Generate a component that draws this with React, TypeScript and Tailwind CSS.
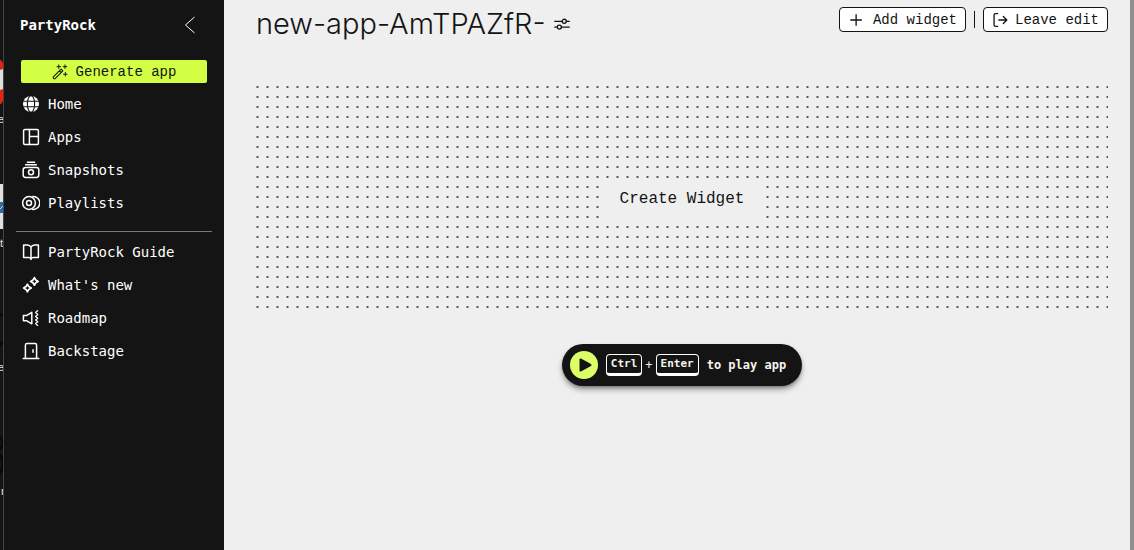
import type { ReactNode } from "react";

const mono = "font-['Liberation_Mono',monospace]";
const sturdyMono = "font-['DejaVu_Sans_Mono',monospace]";

type IconProps = { children: ReactNode; className?: string };

function Icon({ children, className = "size-[18px]" }: IconProps) {
  return (
    <svg
      viewBox="0 0 18 18"
      className={className}
      fill="none"
      stroke="currentColor"
      strokeWidth="1.5"
      strokeLinecap="round"
      strokeLinejoin="round"
      aria-hidden="true"
    >
      {children}
    </svg>
  );
}

const primaryLinks: { label: string; icon: ReactNode }[] = [
  {
    label: "Home",
    icon: (
      <Icon>
        <circle cx="9" cy="9" r="8" fill="currentColor" stroke="none" />
        <g stroke="#141414" strokeWidth="1.1">
          <ellipse cx="9" cy="9" rx="3.6" ry="8.4" />
          <path d="M.5 6.2h17M.5 11.8h17" />
        </g>
      </Icon>
    ),
  },
  {
    label: "Apps",
    icon: (
      <Icon>
        <rect x="1.6" y="1.6" width="14.8" height="14.8" rx="1.2" />
        <path d="M7.4 1.6v14.8M7.4 8.5h9" />
      </Icon>
    ),
  },
  {
    label: "Snapshots",
    icon: (
      <Icon>
        <path d="M5.4 1.3h7.2M3.6 3.8h10.8" />
        <rect x="1.2" y="6.4" width="15.6" height="10" rx="2.4" />
        <circle cx="9" cy="11.2" r="2.5" />
      </Icon>
    ),
  },
  {
    label: "Playlists",
    icon: (
      <Icon>
        <circle cx="7" cy="9" r="6.4" />
        <circle cx="7" cy="9" r="2.5" />
        <path d="M10.8 2.6h.6a6.4 6.4 0 0 1 0 12.8h-.6" />
      </Icon>
    ),
  },
];

const secondaryLinks: { label: string; icon: ReactNode }[] = [
  {
    label: "PartyRock Guide",
    icon: (
      <Icon>
        <path d="M9 4.2C8.2 2.8 7.2 2 5.6 2H1.6v12.4h5c1.4 0 2.4.8 2.4 2.2 0-1.4 1-2.2 2.4-2.2h5V2h-4C10.8 2 9.8 2.8 9 4.2zM9 4.2v12" />
      </Icon>
    ),
  },
  {
    label: "What's new",
    icon: (
      <Icon>
        <path d="M5.4 8.2 6.8 10.6 9.2 12 6.8 13.4 5.4 15.8 4 13.4 1.6 12 4 10.6z" strokeWidth="1.7" />
        <path d="M12.4 1.6 13.8 4 16.2 5.4 13.8 6.8 12.4 9.2 11 6.8 8.6 5.4 11 4z" strokeWidth="1.7" />
      </Icon>
    ),
  },
  {
    label: "Roadmap",
    icon: (
      <Icon>
        <path d="M1.4 6.4h3.4L9.8 3.4v11.4L4.8 11.8H1.4z" />
        <path d="M15.6 1.8 13.6 3.6 15.8 5.6 13.6 7.4 15.8 9.2 13.6 11 15.8 12.8 13.6 14.6 15.6 16.4" strokeWidth="1.3" />
      </Icon>
    ),
  },
  {
    label: "Backstage",
    icon: (
      <Icon>
        <path d="M1.2 16.4h15.6M3.4 16.4V3.2c0-1 .6-1.600 1.600-1.600h8c1 0 1.600.6 1.600 1.600v13.200M11 7.800v2.400" />
      </Icon>
    ),
  },
];

function NavList({ items }: { items: { label: string; icon: ReactNode }[] }) {
  return (
    <ul>
      {items.map((item) => (
        <li key={item.label}>
          <a href="#" className="flex h-[33px] items-center gap-2 pl-1.5">
            {item.icon}
            <span className={`${sturdyMono} text-sm font-medium`}>{item.label}</span>
          </a>
        </li>
      ))}
    </ul>
  );
}

function PageEdge() {
  return (
    <div className="w-1 shrink-0 overflow-hidden border-r border-[#444444] bg-[#141414]" aria-hidden="true">
      <svg width="3" height="550" className="block">
        <path d="M0 60h1l2 3v38l-2 3H0z" fill="#e3230b" />
        <path d="M0 70l3-1v20l-3 1z" fill="#dedede" />
        <rect y="184" width="3" height="45" fill="#dfe1e3" />
        <rect y="202" width="3" height="11" fill="#2e6da8" />
        <path d="M0 209l3-3" stroke="#c4d8e8" />
        <path d="M0 314l3 2M0 345l3-3M0 437c4 3 3 10 0 12M0 455c4 3 3 16 0 18" stroke="#050505" strokeWidth="2" fill="none" />
        <g fill="#e8e8e8" fontFamily="Liberation Sans" fontSize="11">
          <text x="-2" y="123">e</text>
          <text x="0" y="247">t</text>
          <text x="-2" y="371">e</text>
          <text x="1" y="495">r</text>
        </g>
      </svg>
    </div>
  );
}

function Sidebar() {
  return (
    <aside className="w-[220px] shrink-0 bg-[#141414] px-3 text-white">
      <div className="flex h-[49px] items-center justify-between pr-3 pl-1">
        <span className={`${sturdyMono} text-sm font-bold`}>PartyRock</span>
        <button type="button" aria-label="Collapse sidebar">
          <svg viewBox="0 0 20 20" className="size-5" fill="none" stroke="currentColor" aria-hidden="true">
            <path d="M14.5 2 5.5 10l9 8" />
          </svg>
        </button>
      </div>
      <div className="px-[5px] pt-[11px] pb-1">
        <button
          type="button"
          className="flex h-[23px] w-full items-center justify-center gap-2 rounded-xs bg-[#d2ff44] text-sm text-[#141414]"
        >
          <Icon className="size-4">
            <path d="M1.8 14.2 10.2 5.8 12.2 7.8 3.8 16.2a1.4 1.4 0 0 1-2-2zM8.4 7.6l2 2" strokeWidth="1.2" />
            <path d="M7.6 1v4M5.6 3h4M14.6 1v4M12.6 3h4M15 9.5v4M13 11.5h4" strokeWidth="1.1" />
          </Icon>
          Generate app
        </button>
      </div>
      <nav aria-label="Main">
        <NavList items={primaryLinks} />
        <hr className="mt-3 mb-[3px] border-[#777777]" />
        <NavList items={secondaryLinks} />
      </nav>
    </aside>
  );
}

function Header() {
  return (
    <header className="flex items-start justify-between">
      <div className="flex h-12 items-center gap-2">
        <h1 className="font-['Inter',sans-serif] text-[29px] leading-9 font-light">new-app-AmTPAZfR-</h1>
        <button type="button" aria-label="App settings">
          <Icon className="size-4">
            <path d="M.8 6h8.2M14 6h3.2M.8 12.5h2.2M8.4 12.5h8.8" />
            <circle cx="11.5" cy="6" r="2.3" />
            <circle cx="6" cy="12.5" r="2.3" />
          </Icon>
        </button>
      </div>
      <div className="flex items-center gap-2 pt-[7px]">
        <button
          type="button"
          className="flex h-[25px] items-center gap-2 rounded-sm border border-[#141414] bg-white pr-2 pl-[9px] text-sm"
        >
          <Icon className="size-4">
            <path d="M8 3v12M2 9h12" />
          </Icon>
          Add widget
        </button>
        <div className="h-[17px] w-px bg-[#141414]" />
        <button
          type="button"
          className="flex h-[25px] items-center gap-1.5 rounded-sm border border-[#141414] bg-white pr-2 pl-[9px] text-sm"
        >
          <Icon className="size-4">
            <path d="M5.2 1.8H3a1.8 1.8 0 0 0-1.8 1.8v10.8A1.8 1.8 0 0 0 3 16.2h2.2M6.6 9h9M11.6 5 15.6 9l-4 4" />
          </Icon>
          Leave edit
        </button>
      </div>
    </header>
  );
}

function PlayBar() {
  return (
    <button
      type="button"
      className={`${sturdyMono} flex h-[42px] items-center rounded-full bg-[#141414] pr-4 pl-2 text-[#f4f4ea] shadow-md shadow-black/40`}
    >
      <svg viewBox="0 0 28 28" className="size-7" aria-hidden="true">
        <circle cx="14" cy="14" r="14" fill="#dcff65" />
        <path d="M10.5 8.5v11l10-5.5z" fill="#141414" stroke="#141414" strokeWidth="2" strokeLinejoin="round" />
      </svg>
      <kbd className={`${sturdyMono} ml-2 rounded-sm border border-b-3 border-white px-1 text-[11px] leading-[18px] font-bold`}>
        Ctrl
      </kbd>
      <span className="px-[3px] text-xs">+</span>
      <kbd className={`${sturdyMono} rounded-sm border border-b-3 border-white px-1 text-[11px] leading-[18px] font-bold`}>
        Enter
      </kbd>
      <span className="ml-2 text-xs font-bold">to play app</span>
    </button>
  );
}

export default function App() {
  return (
    <div className={`${mono} flex min-h-screen bg-[#efefef] text-[#141414]`}>
      <PageEdge />
      <Sidebar />
      <main className="min-w-0 flex-1 border-r-4 border-[#8f8f8f] pr-[22px] pl-8">
        <Header />
        <section className="mt-[38px] flex h-[226px] items-center justify-center bg-[radial-gradient(ellipse_2px_1px_at_15%_10%,#444_45%,transparent_90%)] bg-size-[10px_10px]">
          <button type="button" className="h-10 bg-[#efefef] px-5 text-base">
            Create Widget
          </button>
        </section>
        <div className="mt-8 flex justify-center">
          <PlayBar />
        </div>
      </main>
    </div>
  );
}
